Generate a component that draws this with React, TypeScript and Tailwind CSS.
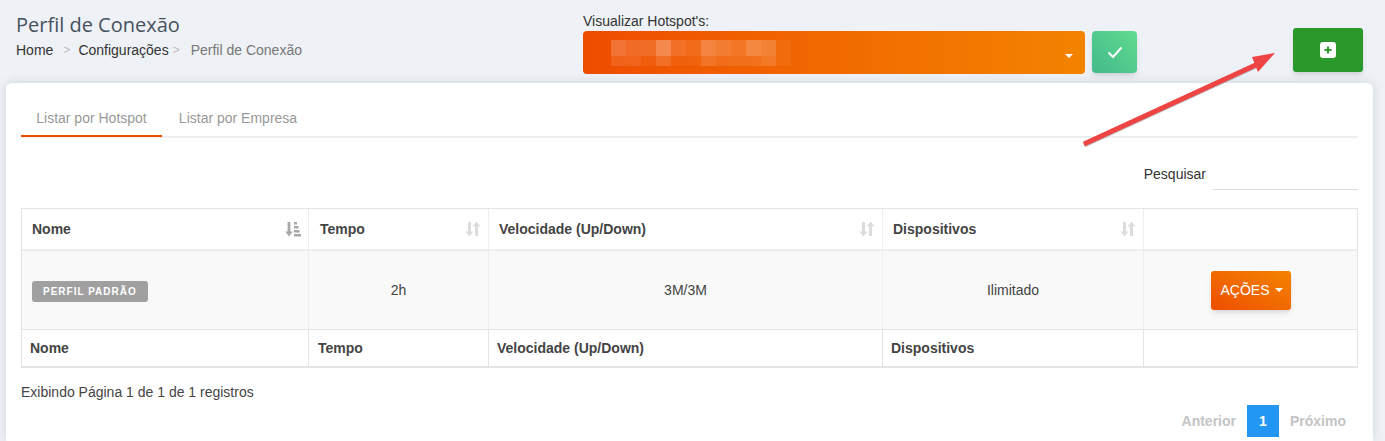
const mosaicTop = [
  'bg-white/20', 'bg-white/15', 'bg-white/15', 'bg-white/30', 'bg-white/15', 'bg-white/10',
  'bg-white/25', 'bg-white/20', 'bg-white/15', 'bg-white/25', 'bg-white/20', 'bg-white/5',
];
const mosaicBottom = [
  'bg-white/10', 'bg-white/10', 'bg-white/5', 'bg-white/15', 'bg-white/5', 'bg-white/5',
  'bg-white/15', 'bg-white/10', 'bg-white/10', 'bg-white/10', 'bg-white/15', 'bg-white/5',
];

function SortIdle() {
  return (
    <svg width="16" height="16" viewBox="0 0 16 16" className="text-[#dcdcdc]" fill="currentColor">
      <path d="M3 1h3v9.5h2.4L4.5 15.5 0.6 10.5H3z" />
      <path d="M11.5 0.5l3.9 5H13V15h-3V5.5H7.6z" />
    </svg>
  );
}

function SortActive() {
  return (
    <svg width="16" height="16" viewBox="0 0 16 16" className="text-[#a8a8a8]" fill="currentColor">
      <path d="M2.6 1H5.4v9.5h2.3l-3.7 5-3.7-5h2.3z" />
      <path d="M9 1h3v2.6H9zM9 5h4.4v2.6H9zM9 9h5.6v2.6H9zM9 13h7v2.6H9z" />
    </svg>
  );
}

function Caret() {
  return <span className="inline-block h-0 w-0 border-x-4 border-t-4 border-x-transparent border-t-white" />;
}

const headCols = ['Nome', 'Tempo', 'Velocidade (Up/Down)', 'Dispositivos'];
const colWidths = ['w-[287px]', 'w-[180px]', 'w-[394px]', 'w-[261px]'];

export default function App() {
  return (
    <div className="relative h-[441px] overflow-hidden bg-[#eef1f5] font-['Liberation_Sans',Arial,sans-serif] text-sm text-[#444]">
      <div className="flex h-[83px]">
        <div className="w-[583px] pl-4 pt-3">
          <h1 className="font-['Open_Sans',sans-serif] text-[20px] leading-[26px] text-[#47525f]">Perfil de Conexão</h1>
          <div className="mt-[2px] flex items-center text-sm leading-5">
            <span className="text-[#333]">Home</span>
            <span className="ml-[10px] text-xs text-[#bbb]">&gt;</span>
            <span className="ml-2 text-[#333]">Configurações</span>
            <span className="ml-1 text-xs text-[#bbb]">&gt;</span>
            <span className="ml-[11px] text-[#777]">Perfil de Conexão</span>
          </div>
        </div>
        <div className="w-[554px] pt-[11px]">
          <div className="text-sm leading-5 text-[#333]">Visualizar Hotspot's:</div>
          <div className="flex gap-[7px]">
            <div className="flex h-[43px] w-[502px] items-center rounded bg-gradient-to-r from-[#ee4c00] to-[#f38300] pl-7 pr-3">
              <div className="w-[180px]">
                <div className="flex h-4">
                  {mosaicTop.map((c, i) => (
                    <div key={i} className={`h-full w-[15px] ${c}`} />
                  ))}
                </div>
                <div className="flex h-[10px]">
                  {mosaicBottom.map((c, i) => (
                    <div key={i} className={`h-full w-[15px] ${c}`} />
                  ))}
                </div>
              </div>
              <div className="ml-auto">
                <Caret />
              </div>
            </div>
            <button className="flex h-[42px] w-[45px] items-center justify-center rounded bg-gradient-to-tr from-[#43b98a] to-[#5fdc8f] shadow-md">
              <svg width="16" height="14" viewBox="0 0 16 14" fill="none" stroke="white" strokeWidth="2">
                <path d="M1.5 7.5l4.5 4.5L14.5 2.5" />
              </svg>
            </button>
          </div>
        </div>
        <div className="pl-[156px] pt-7">
          <button className="flex h-11 w-[70px] items-center justify-center rounded-[3px] bg-[#2b982b] shadow-md">
            <svg width="16" height="16" viewBox="0 0 16 16">
              <rect width="16" height="16" rx="3" fill="white" />
              <path d="M8 4.5v7M4.5 8h7" stroke="#2b982b" strokeWidth="2" />
            </svg>
          </button>
        </div>
      </div>

      <div className="mx-[6px] h-[358px] w-[1367px] rounded-t-md bg-white px-[15px] shadow-[0_0_12px_rgba(0,0,0,0.12)]">
        <div className="flex h-[55px] items-end border-b-2 border-[#eeeeee] text-sm text-[#999]">
          <div className="-mb-[1px] flex h-[29px] w-[141px] items-start justify-center border-b-2 border-[#ee4c00]">Listar por Hotspot</div>
          <div className="flex h-[28px] w-[152px] items-start justify-center">Listar por Empresa</div>
        </div>

        <div className="flex h-[70px] items-start justify-end pt-[17px]">
          <span className="mt-[11px] text-sm leading-4 text-[#333]">Pesquisar</span>
          <div className="ml-[6px] h-[35px] w-[146px] border-b border-[#ddd]" />
        </div>

        <div className="w-[1337px] border border-b-2 border-[#e4e4e4]">
          <div className="flex h-[42px] border-b-2 border-[#eeeeee]">
            {headCols.map((h, i) => (
              <div key={h} className={`flex items-center justify-between border-r border-[#eeeeee] pr-[7px] font-bold ${i === 1 ? 'pl-[11px]' : 'pl-[10px]'} ${colWidths[i]}`}>
                <span>{h}</span>
                {i === 0 ? <SortActive /> : <SortIdle />}
              </div>
            ))}
            <div className="flex-1" />
          </div>
          <div className="flex h-[79px] items-center border-b border-[#e4e4e4] bg-[#f9f9f9]">
            <div className="flex h-full w-[287px] items-center border-r border-[#eeeeee] pl-[10px]">
              <span className="mt-[2px] rounded-[3px] bg-[#a0a0a0] px-[11px] py-[3px] text-[10px] font-bold leading-[15px] tracking-[1px] text-white">PERFIL PADRÃO</span>
            </div>
            <div className="flex h-full w-[180px] items-center justify-center border-r border-[#eeeeee]">2h</div>
            <div className="flex h-full w-[394px] items-center justify-center border-r border-[#eeeeee]">3M/3M</div>
            <div className="flex h-full w-[261px] items-center justify-center border-r border-[#eeeeee]">Ilimitado</div>
            <div className="flex flex-1 items-center justify-center">
              <button className="flex h-[39px] w-20 items-center justify-center gap-[5px] rounded-[3px] bg-gradient-to-tr from-[#ee4c00] to-[#f38300] pl-[2px] text-sm text-white shadow-md">
                AÇÕES <Caret />
              </button>
            </div>
          </div>
          <div className="flex h-[36px]">
            {headCols.map((h, i) => (
              <div key={h} className={`flex items-center border-r border-[#e4e4e4] font-bold ${i === 1 ? 'pl-[9px]' : 'pl-2'} ${colWidths[i]}`}>{h}</div>
            ))}
            <div className="flex-1" />
          </div>
        </div>

        <div className="mt-[14px] text-sm leading-5">Exibindo Página 1 de 1 de 1 registros</div>
        <div className="mt-[3px] flex items-center justify-end pr-[12px] text-sm font-bold text-[#c4c4c4]">
          <span>Anterior</span>
          <span className="mx-[11px] flex h-8 w-8 items-center justify-center bg-[#2196f3] text-white">1</span>
          <span>Próximo</span>
        </div>
      </div>

      <svg className="absolute left-[1080px] top-[48px]" width="200" height="100" viewBox="0 0 200 100">
        <path d="M4 97L180 16" stroke="#777" strokeOpacity="0.5" strokeWidth="5" />
        <path d="M4 96L180 15" stroke="#ee4444" strokeWidth="5" />
        <path d="M195 5L172 9L178 24Z" fill="#ee4444" />
      </svg>
    </div>
  );
}
